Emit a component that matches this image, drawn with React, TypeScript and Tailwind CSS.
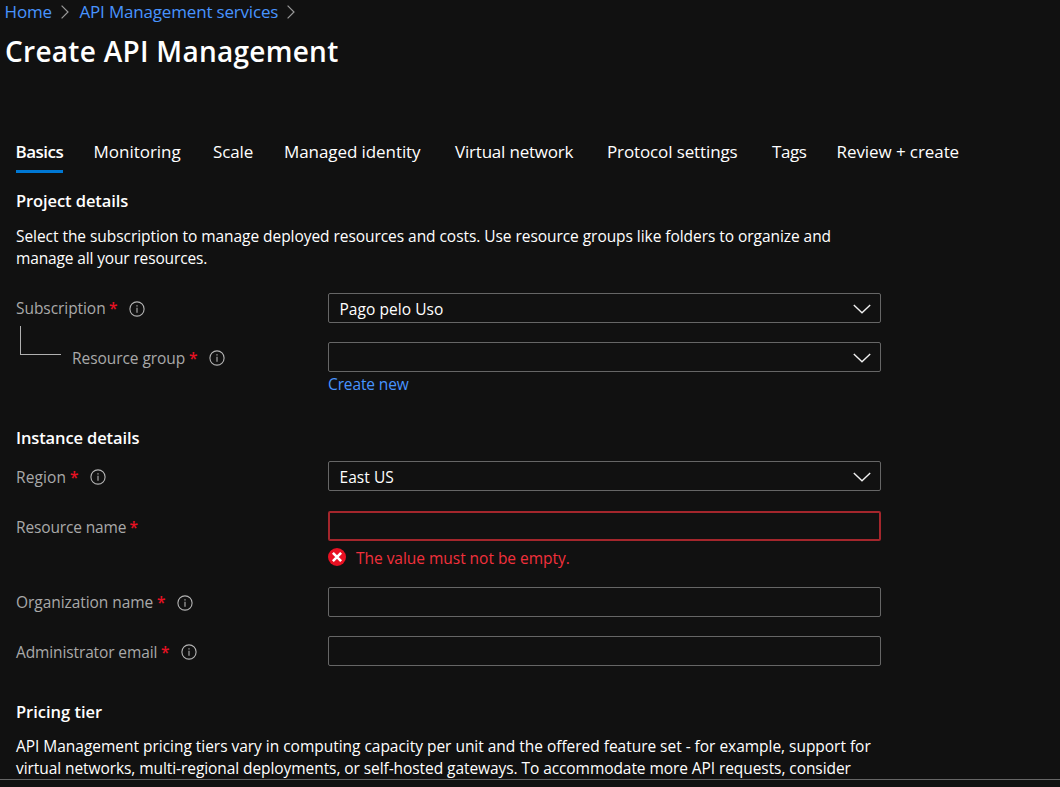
import type { ReactNode } from "react";

function BreadcrumbChevron() {
  return (
    <svg width="8" height="14" viewBox="0 0 8 14" fill="none" stroke="#999" strokeWidth="1.2">
      <path d="M0.6 0.6L7 7 0.6 13.4" />
    </svg>
  );
}

function InfoIcon() {
  return (
    <svg className="mt-px -ml-[0.5px] shrink-0" width="16" height="16" viewBox="0 0 16 16" fill="none" stroke="#b4b4b4">
      <circle cx="8" cy="8" r="7.1" strokeWidth="1.1" />
      <path d="M8 6.8v5" strokeWidth="1.1" />
      <path d="M8 4.2v1.3" strokeWidth="1.2" />
    </svg>
  );
}

function SelectBox({ value, low = false }: { value?: string; low?: boolean }) {
  return (
    <div
      className={`flex h-[30px] w-[553px] items-center justify-between rounded-[2px] border border-[#666] pr-[9.5px] pl-[10.5px] text-white ${
        low ? "pt-0.5" : "pt-px"
      }`}
    >
      <span className="whitespace-nowrap tracking-[0.05px]">{value}</span>
      <svg width="18" height="10" viewBox="0 0 18 10" fill="none" stroke="#f0f0f0" strokeWidth="1.4">
        <path d="M0.8 1l8.2 7.8L17.2 1" />
      </svg>
    </div>
  );
}

function InputBox({ invalid = false }: { invalid?: boolean }) {
  return (
    <div
      className={
        invalid
          ? "h-[30px] w-[553px] rounded-[2px] border-2 border-[#a4262c]"
          : "h-[30px] w-[553px] rounded-[2px] border border-[#666]"
      }
    />
  );
}

type FieldProps = {
  label: string;
  labelClass: string;
  rowClass?: string;
  columnClass?: string;
  info?: boolean;
  children: ReactNode;
};

function Field({ label, labelClass, rowClass = "", columnClass = "w-[312px]", info = true, children }: FieldProps) {
  return (
    <div className={`flex h-[30px] ${rowClass}`}>
      <div className={`flex shrink-0 items-center text-[#a9a9a9] ${columnClass}`}>
        <span className={`shrink-0 whitespace-nowrap ${labelClass}`}>{label}</span>
        <span className="w-5 shrink-0 font-semibold text-[#e81123]">*</span>
        {info && <InfoIcon />}
      </div>
      {children}
    </div>
  );
}

const tabs = [
  { name: "Monitoring", style: "w-[119.5px] tracking-[-0.02px]" },
  { name: "Scale", style: "w-[71px] tracking-[-0.1px]" },
  { name: "Managed identity", style: "w-[171px] tracking-[-0.08px]" },
  { name: "Virtual network", style: "w-[152px] tracking-[-0.2px]" },
  { name: "Protocol settings", style: "w-[165px] tracking-[-0.12px]" },
  { name: "Tags", style: "w-[64.5px] tracking-[-0.4px]" },
  { name: "Review + create", style: "tracking-[-0.08px]" },
];

export default function App() {
  return (
    <div className="flex h-[787px] w-[1060px] flex-col overflow-hidden bg-[#111] font-['Open_Sans','Noto_Sans',sans-serif] text-[15.5px] leading-[22px] tracking-[-0.06px] text-white">
      <div className="flex h-[779px] shrink-0 flex-col overflow-hidden">
        <nav className="flex h-6 shrink-0 items-center pl-[4.6px] text-[17px] text-[#4894fe]">
          <span className="w-[56.4px] tracking-[-0.2px]">Home</span>
          <BreadcrumbChevron />
          <span className="ml-[10.5px] w-[207.5px] whitespace-nowrap tracking-[-0.18px]">API Management services</span>
          <BreadcrumbChevron />
        </nav>
        <h1 className="mt-[7px] h-10 shrink-0 pl-[5px] text-[28px] leading-10 font-semibold tracking-[0.28px]">Create API Management</h1>

        <div className="mt-[70px] flex h-8 shrink-0 pl-4 text-[17px] whitespace-nowrap">
          <div className="mr-[30.5px] h-8 w-[47px] border-b-[3px] border-[#0078d4] -indent-[0.5px] font-semibold tracking-[-0.52px]">
            Basics
          </div>
          {tabs.map((tab) => (
            <div key={tab.name} className={tab.style}>
              {tab.name}
            </div>
          ))}
        </div>

        <main className="flex flex-col pl-4">
          <h2 className="mt-[17px] h-[22px] text-[16.5px] font-semibold tracking-[-0.09px]">Project details</h2>
          <p className="mt-[13px] whitespace-nowrap tracking-[-0.053px]">
            Select the subscription to manage deployed resources and costs. Use resource groups like folders to organize and
            <br />
            <span className="tracking-[-0.14px]">manage all your resources.</span>
          </p>

          <Field label="Subscription" labelClass="w-[93px]" rowClass="mt-6">
            <SelectBox value="Pago pelo Uso" />
          </Field>
          <div className="mt-[3px] flex h-[46px]">
            <div className="ml-1 h-[29px] w-[41px] border-b border-l border-[#b0b0b0]" />
            <Field label="Resource group" labelClass="w-[117px]" rowClass="mt-4 ml-[11px]" columnClass="w-[256px] pt-px">
              <SelectBox low />
            </Field>
          </div>
          <a className="mt-px ml-[312px] tracking-[-0.12px] text-[#4894fe]">Create new</a>

          <h2 className="mt-[32px] h-[22px] text-[16.5px] font-semibold tracking-[-0.12px]">Instance details</h2>
          <Field label="Region" labelClass="w-[54px] tracking-[0.1px]" rowClass="mt-3" columnClass="w-[312px] pt-px">
            <SelectBox value="East US" low />
          </Field>
          <Field
            label="Resource name"
            labelClass="w-[113.5px] tracking-[-0.15px]"
            rowClass="mt-5"
            columnClass="w-[312px] pt-px"
            info={false}
          >
            <InputBox invalid />
          </Field>
          <div className="mt-[6px] ml-[312px] flex h-[22px] tracking-[-0.03px] text-[#f1303c]">
            <svg className="mr-[9px]" width="19" height="20" viewBox="0 0 19 20" fill="none">
              <circle cx="9" cy="10" r="9" fill="#e81123" />
              <path d="M4.9 5.9l8.2 8.2M13.1 5.9l-8.2 8.2" stroke="#fff" strokeWidth="2.6" />
            </svg>
            The value must not be empty.
          </div>
          <Field label="Organization name" labelClass="w-[141px]" rowClass="mt-[18px]">
            <InputBox />
          </Field>
          <Field
            label="Administrator email"
            labelClass="w-[145px] tracking-[-0.12px]"
            rowClass="mt-[19px]"
            columnClass="w-[312px] pt-px"
          >
            <InputBox />
          </Field>

          <h2 className="mt-[35px] h-[22px] text-[16.5px] font-semibold tracking-[-0.02px]">Pricing tier</h2>
          <p className="mt-3 whitespace-nowrap tracking-[-0.027px]">
            API Management pricing tiers vary in computing capacity per unit and the offered feature set - for example, support for
            <br />
            <span className="tracking-[-0.073px]">
              virtual networks, multi-regional deployments, or self-hosted gateways. To accommodate more API requests, consider
            </span>
          </p>
        </main>
      </div>
      <footer className="h-2 border-t border-[#666]" />
    </div>
  );
}
